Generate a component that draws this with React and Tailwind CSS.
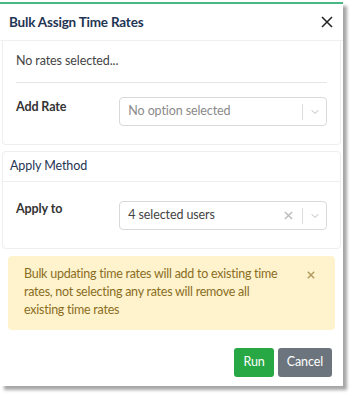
import React from "react";

function Chevron() {
  return (
    <svg width="10" height="10" viewBox="0 0 20 20" className="text-[#bbb]">
      <path d="M4 7l6 6 6-6" fill="none" stroke="currentColor" strokeWidth="2" strokeLinecap="round" />
    </svg>
  );
}

function FakeSelect({ value, placeholder, clearable }) {
  return (
    <div className="w-[209px] h-[29px] border border-[#d9d9d9] rounded-[4px] flex items-center pl-[8px] pr-[6px]">
      <span className={`flex-1 truncate ${placeholder ? "text-[#8a8a8a]" : "text-[#444]"}`}>{value}</span>
      {clearable && (
        <svg width="9" height="9" viewBox="0 0 10 10" className="mr-[9px] text-[#bbb]">
          <path d="M1 1l8 8M9 1l-8 8" stroke="currentColor" strokeWidth="1.6" />
        </svg>
      )}
      <span className="w-px h-[16px] bg-[#ddd] mr-[7px]" />
      <Chevron />
    </div>
  );
}

export default function App() {
  return (
    <div
      className="w-[356px] h-[396px] bg-white pt-[2px] text-[12.5px] tracking-[-0.1px] text-[#444]"
      style={{ fontFamily: 'Lato, "Noto Sans", sans-serif' }}
    >
      <div className="w-[343px] h-[384px] bg-white border-t-2 border-[#46b883] shadow-[4px_4px_3px_rgba(0,0,0,0.35)] flex flex-col">
        {/* Header */}
        <div className="h-[37px] flex items-center justify-between pl-[9px] pr-[10px] border-b border-[#f0f0f0]">
          <span className="font-bold text-[13.5px] tracking-[-0.2px] text-[#1f3554]">Bulk Assign Time Rates</span>
          <svg width="12" height="12" viewBox="0 0 12 12" className="text-[#222]">
            <path d="M1 1l10 10M11 1L1 11" stroke="currentColor" strokeWidth="1.5" />
          </svg>
        </div>

        {/* Rates card */}
        <div className="mx-[2px] border border-t-0 border-[#eee] rounded-b-[4px] px-[13px] pb-[18px]">
          <div className="h-[42px] flex items-center border-b border-[#e6e6e6]">No rates selected...</div>
          <div className="flex items-start pt-[14px]">
            <span className="w-[104px] font-bold text-[#333] pt-[1px]">Add Rate</span>
            <FakeSelect value="No option selected" placeholder />
          </div>
        </div>

        {/* Apply method card */}
        <div className="mx-[2px] mt-[6px] border border-[#eee] rounded-[4px]">
          <div className="h-[30px] flex items-center px-[7px] border-b border-[#eee] text-[#1f3554]">Apply Method</div>
          <div className="flex items-start px-[13px] pt-[19px] pb-[18px]">
            <span className="w-[104px] font-bold text-[#333] -mt-[1px]">Apply to</span>
            <FakeSelect value="4 selected users" clearable />
          </div>
        </div>

        {/* Warning */}
        <div className="mx-[8px] mt-[7px] bg-[#fff3cd] rounded-[4px] pl-[16px] pr-[20px] pt-[9px] pb-[11px] flex items-start justify-between text-[#8a6d1e] leading-[18px] tracking-[-0.25px]">
          <span className="w-[262px]">
            Bulk updating time rates will add to existing time rates, not selecting any rates will remove all existing time rates
          </span>
          <svg width="8" height="8" viewBox="0 0 10 10" className="mt-[6px] text-[#b09a5c]">
            <path d="M1 1l8 8M9 1l-8 8" stroke="currentColor" strokeWidth="1.8" />
          </svg>
        </div>

        {/* Footer */}
        <div className="flex justify-end gap-[4px] pr-[11px] pt-[18px]">
          <button className="h-[29px] px-[9px] rounded-[3px] bg-[#28a745] text-white">Run</button>
          <button className="h-[29px] px-[9px] rounded-[3px] bg-[#6c757d] text-white">Cancel</button>
        </div>
      </div>
    </div>
  );
}
